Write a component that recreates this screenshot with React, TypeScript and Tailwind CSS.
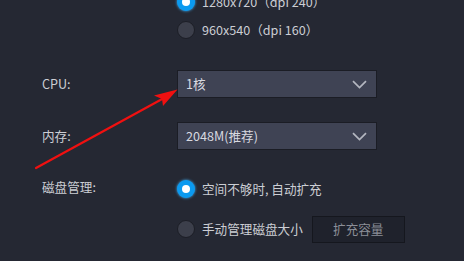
import { ReactNode } from "react";

const font = {
	fontFamily: '"Noto Sans CJK SC", "Noto Sans", sans-serif',
};

function Radio({ checked, children }: { checked?: boolean; children: ReactNode }) {
	return (
		<div className="flex items-center h-[28px] shrink-0">
			{checked ? (
				<span className="flex shrink-0 items-center justify-center w-[18px] h-[18px] rounded-full bg-[#0b9af0] shadow-[0_0_3px_#45b6ff]">
					<span className="w-[8px] h-[8px] rounded-full bg-white" />
				</span>
			) : (
				<span className="shrink-0 w-[18px] h-[18px] rounded-full bg-[#3c3f4b] border border-[#1c1e26]" />
			)}
			<span className="ml-[7px] text-[12.6px] text-[#ccced4] whitespace-nowrap">{children}</span>
		</div>
	);
}

function Chevron() {
	return (
		<svg width="15" height="9" viewBox="0 0 15 9" fill="none">
			<path d="M1 1.2 L7.5 7.5 L14 1.2" stroke="#b4b7c0" strokeWidth="1.7" />
		</svg>
	);
}

function Select({ value }: { value: string }) {
	return (
		<div className="flex shrink-0 items-center justify-between w-[200px] h-[28px] pl-[8px] pr-[9px] bg-[#3f4354] border border-[#1b1d25]">
			<span className="text-[12.6px] text-[#d8dae0]">{value}</span>
			<Chevron />
		</div>
	);
}

function Label({ children }: { children: ReactNode }) {
	return <div className="w-[177px] shrink-0 pl-[42px] text-[12.6px] text-[#ccced4]">{children}</div>;
}

export default function App() {
	return (
		<div className="relative w-[464px] h-[261px] overflow-hidden bg-[#252833]" style={font}>
			<div className="flex flex-col -mt-[12px]">
				<div className="flex">
					<div className="w-[177px] shrink-0" />
					<div className="flex flex-col">
						<Radio checked>1280x720（dpi 240）</Radio>
						<Radio>960x540（dpi 160）</Radio>
					</div>
				</div>

				<div className="flex items-center mt-[26px]">
					<Label>CPU:</Label>
					<Select value="1核" />
				</div>

				<div className="flex items-center mt-[24px]">
					<Label>内存:</Label>
					<Select value="2048M(推荐)" />
				</div>

				<div className="flex mt-[25px]">
					<Label>
						<div className="mt-[3px]">磁盘管理:</div>
					</Label>
					<div className="flex flex-col gap-[12px]">
						<Radio checked>空间不够时, 自动扩充</Radio>
						<div className="flex items-center">
							<Radio>手动管理磁盘大小</Radio>
							<button className="ml-[9px] w-[93px] h-[27px] bg-[#1f222c] border border-[#15171e] text-[12.6px] text-[#8b8e97]">
								扩充容量
							</button>
						</div>
					</div>
				</div>
			</div>

			<svg className="absolute left-0 top-0 pointer-events-none" width="464" height="261" viewBox="0 0 464 261">
				<line x1="36" y1="168" x2="164" y2="98" stroke="#f01010" strokeWidth="2.2" strokeLinecap="round" />
				<path d="M177.5 89.5 L154 95.5 L162 99 L163 106 Z" fill="#f01010" />
			</svg>
		</div>
	);
}
